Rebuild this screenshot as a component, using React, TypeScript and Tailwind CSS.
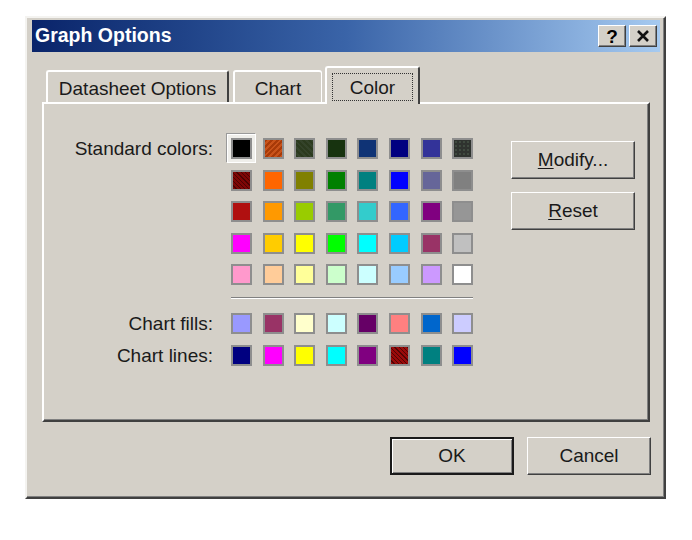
const standardColors = [
  [
    'bg-[#000000]',
    'bg-[repeating-linear-gradient(135deg,#a83a08_0_2px,#c9531a_2px_4px)]',
    'bg-[repeating-linear-gradient(45deg,#2b3a1e_0_2px,#34432a_2px_4px)]',
    'bg-[#17330f]',
    'bg-[#0f3375]',
    'bg-[#000080]',
    'bg-[#333399]',
    'bg-[radial-gradient(circle,#3f4a3f_0_1px,#2f332f_1.5px)] bg-[length:4px_4px]',
  ],
  ['bg-[repeating-linear-gradient(45deg,#7e0606_0_2px,#4a0202_2px_3px)]', 'bg-[#ff6600]', 'bg-[#808000]', 'bg-[#008000]', 'bg-[#008080]', 'bg-[#0000ff]', 'bg-[#666699]', 'bg-[#808080]'],
  ['bg-[#b01010]', 'bg-[#ff9900]', 'bg-[#99cc00]', 'bg-[#339966]', 'bg-[#33cccc]', 'bg-[#3366ff]', 'bg-[#800080]', 'bg-[#969696]'],
  ['bg-[#ff00ff]', 'bg-[#ffcc00]', 'bg-[#ffff00]', 'bg-[#00ff00]', 'bg-[#00ffff]', 'bg-[#00ccff]', 'bg-[#993366]', 'bg-[#c0c0c0]'],
  ['bg-[#ff99cc]', 'bg-[#ffcc99]', 'bg-[#ffff99]', 'bg-[#ccffcc]', 'bg-[#ccffff]', 'bg-[#99ccff]', 'bg-[#cc99ff]', 'bg-[#ffffff]'],
];

const chartFills = ['bg-[#9999ff]', 'bg-[#993366]', 'bg-[#ffffcc]', 'bg-[#ccffff]', 'bg-[#660066]', 'bg-[#ff8080]', 'bg-[#0066cc]', 'bg-[#ccccff]'];

const chartLines = [
  'bg-[#000080]',
  'bg-[#ff00ff]',
  'bg-[#ffff00]',
  'bg-[#00ffff]',
  'bg-[#800080]',
  'bg-[repeating-linear-gradient(45deg,#9a0a0a_0_2px,#500404_2px_3px)]',
  'bg-[#008080]',
  'bg-[#0000ff]',
];

const raised = 'border-t border-l border-t-white border-l-white border-r border-b border-r-[#404040] border-b-[#404040] shadow-[inset_-1px_-1px_0_#808080]';

function Swatch({ cls, selected }: { cls: string; selected?: boolean }) {
  return (
    <div
      className={`w-[21px] h-[21px] border-2 border-[#8e8e8e] ${cls} ${
        selected ? 'shadow-[0_0_0_3px_#efeeea,0_0_0_4px_#ffffff,-1px_-1px_0_4px_#9a9a9a]' : ''
      }`}
    />
  );
}

function Row({ label, colors }: { label: string; colors: string[] }) {
  return (
    <>
      <div className="h-[21px] flex items-center justify-end leading-none">{label}</div>
      <div className="grid grid-cols-[repeat(8,21px)] gap-x-[10.6px]">
        {colors.map((c, i) => (
          <Swatch key={i} cls={c} />
        ))}
      </div>
    </>
  );
}

function Button({ children, def }: { children: React.ReactNode; def?: boolean }) {
  return (
    <button
      className={`w-[124px] h-[38px] flex items-center justify-center bg-[#d4d0c8] text-[19px] ${
        def
          ? 'border-2 border-[#1a1a1a] shadow-[inset_1px_1px_0_#fff,inset_-1px_-1px_0_#808080]'
          : raised
      }`}
    >
      {children}
    </button>
  );
}

export default function App() {
  return (
    <div className="w-[692px] h-[540px] bg-white pt-[16px] pl-[25px] font-['Liberation_Sans',Arial,sans-serif] text-[#1a1a1a]">
      <div className="w-[641px] h-[483px] bg-[#d4d0c8] border-2 border-t-[#f4f3f0] border-l-[#f4f3f0] border-r-[#404040] border-b-[#404040] shadow-[inset_-1px_-1px_0_#808080] pt-[2px] pl-[5px] pr-[4px]">
        {/* title bar */}
        <div className="h-[32px] flex items-center pl-[3px] pr-[3px] bg-linear-to-r from-[#0a246a] via-[#3a64a8] to-[#a6caf0]">
          <span className="text-white font-bold text-[19.5px] leading-none">Graph Options</span>
          <div className="ml-auto flex gap-[3px]">
            <div className={`w-[28px] h-[22px] bg-[#d4d0c8] flex items-center justify-center font-bold text-[19px] leading-none text-black ${raised}`}>
              ?
            </div>
            <div className={`w-[28px] h-[22px] bg-[#d4d0c8] flex items-center justify-center ${raised}`}>
              <svg width="14" height="12" viewBox="0 0 14 12">
                <path d="M2 1 L12 11 M12 1 L2 11" stroke="#111" strokeWidth="2.6" />
              </svg>
            </div>
          </div>
        </div>

        {/* tabs */}
        <div className="mt-[14px] ml-[10px] pl-[4px] flex items-end text-[19px]">
          <div className="w-[183px] h-[32px] rounded-t-[3px] border-t-2 border-l-2 border-t-white border-l-white border-r-2 border-r-[#404040] flex items-center justify-center leading-none pt-[2px]">
            Datasheet Options
          </div>
          <div className="ml-[4px] w-[89px] h-[32px] rounded-t-[3px] border-t-2 border-l-2 border-t-white border-l-white border-r border-r-white flex items-center justify-center leading-none pt-[2px]">
            Chart
          </div>
          <div className="relative z-10 -mb-[2px] ml-[3px] w-[95px] h-[38px] rounded-t-[3px] bg-[#d4d0c8] border-t-2 border-l-2 border-t-white border-l-white border-r-2 border-r-[#404040] flex justify-center pt-[5px]">
            <span className="w-[81px] h-[28px] border border-dotted border-[#333] flex items-center justify-center leading-none">
              Color
            </span>
          </div>
        </div>

        {/* panel */}
        <div className="ml-[10px] w-[608px] h-[320px] border-2 border-t-white border-l-white border-r-[#404040] border-b-[#404040] shadow-[inset_-1px_-1px_0_#808080] flex pt-[34px] text-[19px]">
          <div className="grid grid-cols-[169px_242px] gap-x-[18px] content-start">
            <div className="h-[21px] flex items-center justify-end leading-none">Standard colors:</div>
            <div className="grid grid-cols-[repeat(8,21px)] gap-x-[10.6px] gap-y-[10.5px]">
              {standardColors.flat().map((c, i) => (
                <Swatch key={i} cls={c} selected={i === 0} />
              ))}
            </div>
            <div />
            <div className="mt-[12px] mb-[14px] h-[2px] border-t border-t-[#808080] border-b border-b-white" />
            <Row label="Chart fills:" colors={chartFills} />
            <div className="col-span-2 h-[11px]" />
            <Row label="Chart lines:" colors={chartLines} />
          </div>
          <div className="ml-[38px] mt-[3px] flex flex-col gap-[13px]">
            <Button>
              <span>
                <span className="underline underline-offset-2">M</span>odify...
              </span>
            </Button>
            <Button>
              <span>
                <span className="underline underline-offset-2">R</span>eset
              </span>
            </Button>
          </div>
        </div>

        {/* bottom buttons */}
        <div className="mt-[15px] flex justify-end gap-[13px] pr-[9px]">
          <Button def>OK</Button>
          <Button>Cancel</Button>
        </div>
      </div>
    </div>
  );
}
